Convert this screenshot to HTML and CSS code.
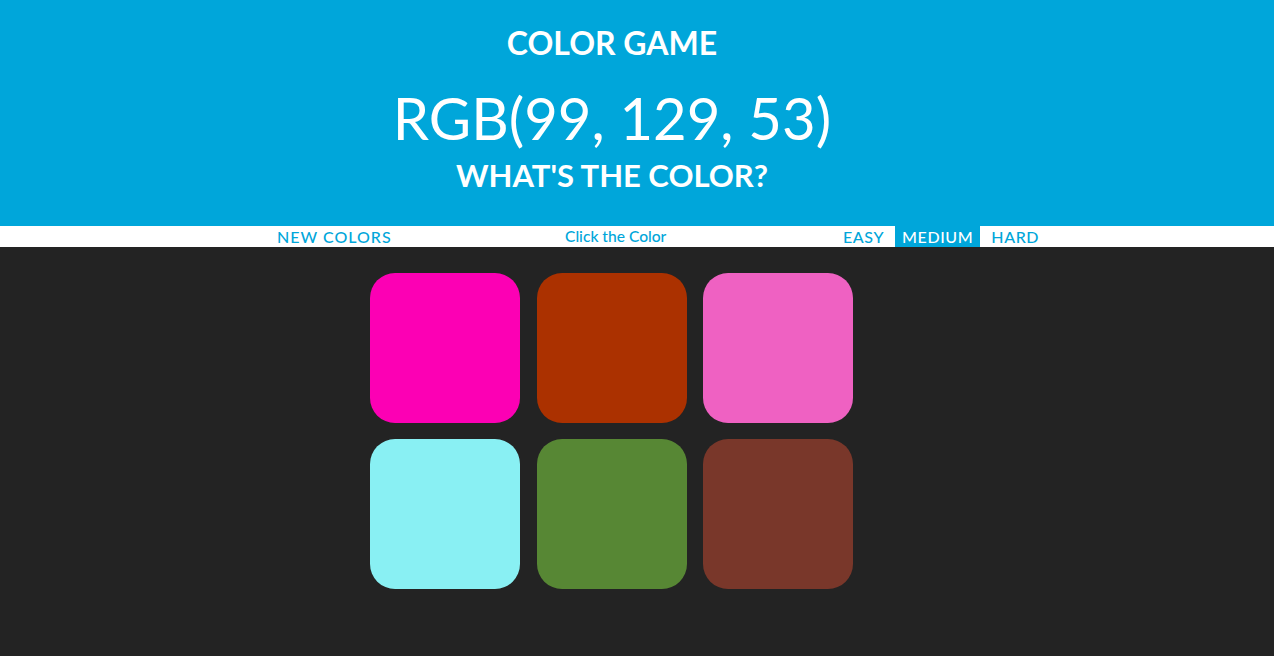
FILE: index.html
```html
<!DOCTYPE html>
<html>
<head>
<meta charset="utf-8">
<link rel="stylesheet" href="styles.css">
</head>
<body>
<header class="top">
  <div class="title">COLOR GAME</div>
  <div class="rgb">RGB(99, 129, 53)</div>
  <div class="question">WHAT'S THE COLOR?</div>
</header>
<nav class="bar">
  <div class="slot slot-left"><button class="btn">NEW COLORS</button></div>
  <div class="slot slot-mid"><span class="message">Click the Color</span></div>
  <div class="slot slot-right">
    <button class="btn mode">EASY</button>
    <button class="btn mode selected">MEDIUM</button>
    <button class="btn mode">HARD</button>
  </div>
</nav>
<main class="stage">
  <div class="grid">
    <div class="square" style="background:#fc00b4"></div>
    <div class="square" style="background:#ab3100"></div>
    <div class="square" style="background:#ef61c2"></div>
    <div class="square" style="background:#89f0f3"></div>
    <div class="square" style="background:#578734"></div>
    <div class="square" style="background:#79372a"></div>
  </div>
</main>
</body>
</html>
```
FILE: styles.css
```css
* { box-sizing: border-box; }
html, body { margin: 0; padding: 0; }
body {
  background: #232323;
  font-family: Lato, "Open Sans", sans-serif;
  width: 1274px;
  height: 656px;
  overflow: hidden;
}
.top {
  background: #00a6da;
  color: #fff;
  height: 226px;
  width: 1274px;
  padding-right: 50px;
  text-align: center;
  padding-top: 24px;
}
.title {
  font-size: 32px;
  font-weight: 700;
  line-height: 38px;
}
.rgb {
  font-size: 58px;
  font-weight: 400;
  line-height: 70px;
  margin-top: 21px;
}
.question {
  font-size: 31px;
  font-weight: 700;
  line-height: 40px;
  margin-top: 2px;
}
.bar {
  background: #fff;
  height: 21px;
  display: flex;
  align-items: stretch;
  padding-left: 270px;
}
.slot { display: flex; align-items: stretch; }
.slot-left { width: 295px; }
.slot-mid { width: 271px; align-items: center; }
.slot-right { gap: 4px; }
.btn {
  border: none;
  background: #fff;
  color: #00a6da;
  font-family: Lato, "Open Sans", sans-serif;
  font-size: 16px;
  font-weight: 500;
  letter-spacing: 1px;
  text-transform: uppercase;
  padding: 0 7px;
  height: 21px;
  line-height: 21px;
  margin: 0;
}
.btn.mode { letter-spacing: 0.6px; }
.btn.selected { background: #00a6da; color: #fff; }
.message {
  color: #00a6da;
  font-size: 15.6px;
  font-weight: 500;
  line-height: 21px;
}
.stage {
  width: 1223px;
  display: flex;
  justify-content: center;
  padding-top: 26px;
}
.grid {
  display: grid;
  grid-template-columns: repeat(3, 150px);
  grid-auto-rows: 150px;
  column-gap: 16.5px;
  row-gap: 16px;
}
.square { border-radius: 25px; }
```
